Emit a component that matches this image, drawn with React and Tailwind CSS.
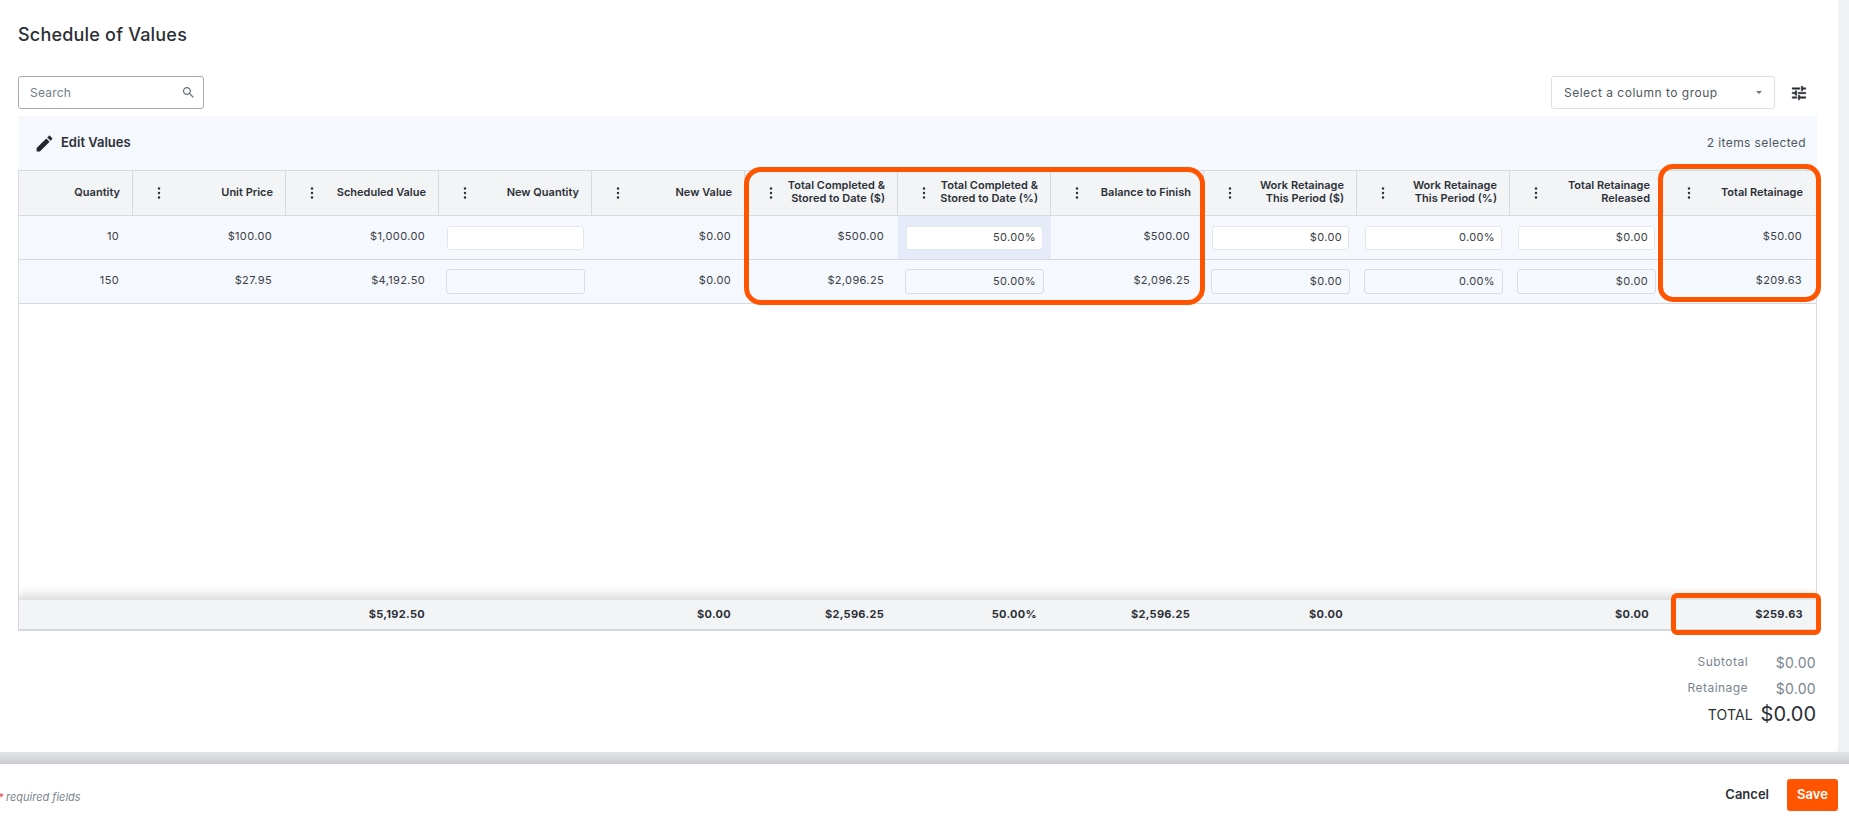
import React from "react";

const inter = "font-['Inter',sans-serif]";

const columns = [
  { title: ["Quantity"] },
  { title: ["Unit Price"], menu: true },
  { title: ["Scheduled Value"], menu: true },
  { title: ["New Quantity"], menu: true },
  { title: ["New Value"], menu: true },
  { title: ["Total Completed &", "Stored to Date ($)"], menu: true },
  { title: ["Total Completed &", "Stored to Date (%)"], menu: true },
  { title: ["Balance to Finish"], menu: true },
  { title: ["Work Retainage", "This Period ($)"], menu: true },
  { title: ["Work Retainage", "This Period (%)"], menu: true },
  { title: ["Total Retainage", "Released"], menu: true },
  { title: ["Total Retainage"], menu: true },
];

const rows = [
  ["10", "$100.00", "$1,000.00", { v: "" }, "$0.00", "$500.00", { v: "50.00%", sel: true }, "$500.00", { v: "$0.00" }, { v: "0.00%" }, { v: "$0.00" }, "$50.00"],
  ["150", "$27.95", "$4,192.50", { v: "", off: true }, "$0.00", "$2,096.25", { v: "50.00%", off: true }, "$2,096.25", { v: "$0.00", off: true }, { v: "0.00%", off: true }, { v: "$0.00", off: true }, "$209.63"],
];

const totals = ["", "", "$5,192.50", "", "$0.00", "$2,596.25", "50.00%", "$2,596.25", "$0.00", "", "$0.00", "$259.63"];

const gridCols = "grid grid-cols-[114px_repeat(10,153px)_1fr]";

const Kebab = () => (
  <svg width="4" height="12" viewBox="0 0 4 12" className="fill-[#2b3036] shrink-0">
    <circle cx="2" cy="1.5" r="1.2" />
    <circle cx="2" cy="6" r="1.2" />
    <circle cx="2" cy="10.5" r="1.2" />
  </svg>
);

const Cell = ({ cell }) => {
  if (typeof cell === "string") {
    return <div className="flex h-full items-center justify-end pr-[14px] pb-[2px] text-[11px] tracking-[0.35px] text-[#3a4046]">{cell}</div>;
  }
  if (cell.off) {
    return (
      <div className="flex h-full items-center px-[7px]">
        <div className="flex h-[25px] w-full items-center justify-end rounded-[3px] border border-[#d9dde2] pr-[7px] text-[11px] tracking-[0.35px] text-[#3a4046]">{cell.v}</div>
      </div>
    );
  }
  return (
    <div className={`flex h-full items-center px-[7px] ${cell.sel ? "bg-[#e5ebf9]" : ""}`}>
      <div className="mx-[1px] flex h-[24px] w-full items-center justify-end rounded-[3px] border border-[#e3e6ea] bg-white pr-[6px] text-[11px] tracking-[0.35px] text-[#3a4046]">{cell.v}</div>
    </div>
  );
};

export default function App() {
  return (
    <div className={`flex h-screen flex-col overflow-hidden bg-white ${inter}`}>
      <div className="flex h-[764px] shrink-0 flex-col bg-[#f1f2f3]">
        <div className="relative mr-[11px] flex h-[752px] flex-col rounded-br-[4px] bg-white px-[18px] pt-[2px] pr-[21px]">
          <h1 className="mt-[21px] text-[18px] leading-[24px] font-medium tracking-[0.2px] text-[#2b3036]">Schedule of Values</h1>

          <div className="mt-[29px] flex h-[33px] items-center justify-between">
            <div className="flex h-[33px] w-[186px] items-center justify-between rounded-[3px] border border-[#a3aab1] pr-[7px] pl-[11px]">
              <span className="text-[12px] tracking-[0.2px] text-[#737d87]">Search</span>
              <svg width="15" height="15" viewBox="0 0 24 24" className="fill-[#65707b]">
                <path d="M15.5 14h-.79l-.28-.27C15.41 12.59 16 11.11 16 9.5 16 5.91 13.09 3 9.5 3S3 5.91 3 9.5 5.91 16 9.5 16c1.61 0 3.09-.59 4.23-1.57l.27.28v.79l5 4.99L20.49 19l-4.99-5zm-6 0C7.01 14 5 11.99 5 9.5S7.01 5 9.5 5 14 7.01 14 9.5 11.99 14 9.5 14z" />
              </svg>
            </div>
            <div className="flex items-center gap-[15px] pr-[9px]">
              <div className="flex h-[33px] w-[224px] items-center justify-between rounded-[3px] border border-[#dcdfe3] pr-[12px] pl-[12px]">
                <span className="text-[12px] tracking-[0.5px] text-[#4f5862]">Select a column to group</span>
                <span className="h-0 w-0 border-x-[3px] border-t-[3px] border-x-transparent border-t-[#6b7580]" />
              </div>
              <svg width="18" height="18" viewBox="0 0 24 24" className="fill-[#23282d] stroke-[#23282d] stroke-[0.6]">
                <path d="M3 17v2h6v-2H3zM3 5v2h10V5H3zm10 16v-2h8v-2h-8v-2h-2v6h2zM7 9v2H3v2h4v2h2V9H7zm14 4v-2H11v2h10zm-6-4h2V7h4V5h-4V3h-2v6z" />
              </svg>
            </div>
          </div>

          <div className="mt-[7px] flex h-[54px] items-center justify-between bg-[#f5f8fd] pr-[11px] pl-[16px]">
            <div className="flex items-center gap-[6px]">
              <svg width="21" height="21" viewBox="0 0 24 24" className="fill-[#23282d]">
                <path d="M3 17.25V21h3.75L17.81 9.94l-3.75-3.75L3 17.25zM20.71 7.04c.39-.39.39-1.02 0-1.41l-2.34-2.34c-.39-.39-1.02-.39-1.41 0l-1.83 1.83 3.75 3.75 1.83-1.83z" />
              </svg>
              <span className="text-[13px] font-semibold text-[#2b3036]">Edit Values</span>
            </div>
            <span className="text-[12px] tracking-[0.4px] text-[#4f5862]">2 items selected</span>
          </div>

          <div className="flex min-h-0 flex-1 flex-col border-x border-[#d9dce0]">
            <div className={`${gridCols} h-[46px] border-y border-[#d6d9dd] bg-[#f3f4f6]`}>
              {columns.map((col) => (
                <div key={col.title.join(" ")} className="flex items-center justify-between border-r border-[#d6d9dd] pr-[12px] pl-[24px] last:border-r-0 last:pr-[13px]">
                  {col.menu ? <Kebab /> : <span />}
                  <div className="pb-[2px] text-right text-[11px] leading-[13px] font-semibold text-[#2b3036]">
                    {col.title.map((line) => (
                      <div key={line}>{line}</div>
                    ))}
                  </div>
                </div>
              ))}
            </div>

            {rows.map((row) => (
              <div key={row[0]} className={`${gridCols} h-[44px] border-b border-[#d6d9dd] bg-[#f5f8fd]`}>
                {row.map((cell, i) => (
                  <Cell key={i} cell={cell} />
                ))}
              </div>
            ))}
          </div>

          <div className={`${gridCols} h-[32px] shrink-0 border-t border-b-2 border-l border-[#d4d7dc] border-t-[#dfe1e4] bg-[#f3f4f6] shadow-[0_-5px_10px_rgba(0,0,0,0.14)] [clip-path:inset(-14px_0_0_0)]`}>
            {totals.map((t, i) => (
              <div key={i} className="flex items-center justify-end pr-[14px] pb-[1px] text-[11px] font-bold tracking-[0.3px] text-[#2b3036]">
                {t}
              </div>
            ))}
          </div>

          <div className="flex h-[121px] shrink-0 flex-col items-end pt-[18px] pr-[1px] text-[#7a8591]">
            <div className="flex h-[26px] items-center">
              <span className="text-[12px] tracking-[0.45px]">Subtotal</span>
              <span className="w-[68px] text-right text-[14px] tracking-[0.3px]">$0.00</span>
            </div>
            <div className="flex h-[26px] items-center">
              <span className="text-[12px] tracking-[0.45px]">Retainage</span>
              <span className="w-[68px] text-right text-[14px] tracking-[0.3px]">$0.00</span>
            </div>
            <div className="flex h-[26px] items-center text-[#2b3036]">
              <span className="text-[14px] tracking-[0.2px]">TOTAL</span>
              <span className="w-[63px] text-right text-[20px]">$0.00</span>
            </div>
          </div>

          {/* callouts drawn over the table */}
          <div className="absolute top-[167px] left-[744px] h-[138px] w-[461px] rounded-[17px] border-[5px] border-[#ff5500]" />
          <div className="absolute top-[164px] left-[1658px] h-[138px] w-[163px] rounded-[15px] border-[5px] border-[#ff5500]" />
          <div className="absolute top-[593px] left-[1671px] h-[42px] w-[150px] rounded-[6px] border-[5px] border-[#ff5500]" />
        </div>
        <div className="h-[12px] bg-gradient-to-b from-[#e3e4e7] to-[#cbcccf]" />
      </div>

      <div className="flex flex-1 items-center justify-between pt-[5px] pr-[11px] pl-[6px]">
        <span className="relative top-[2px] text-[11px] text-[#7a8591] italic">
          <span className="absolute left-[-8px] text-[#e5484d]">*</span>
          required fields
        </span>
        <div className="flex items-center gap-[18px]">
          <span className="text-[13px] font-semibold text-[#2b3036]">Cancel</span>
          <button className="h-[32px] w-[51px] rounded-[3px] bg-[#ff5500] text-[13px] font-semibold text-white">Save</button>
        </div>
      </div>
    </div>
  );
}
